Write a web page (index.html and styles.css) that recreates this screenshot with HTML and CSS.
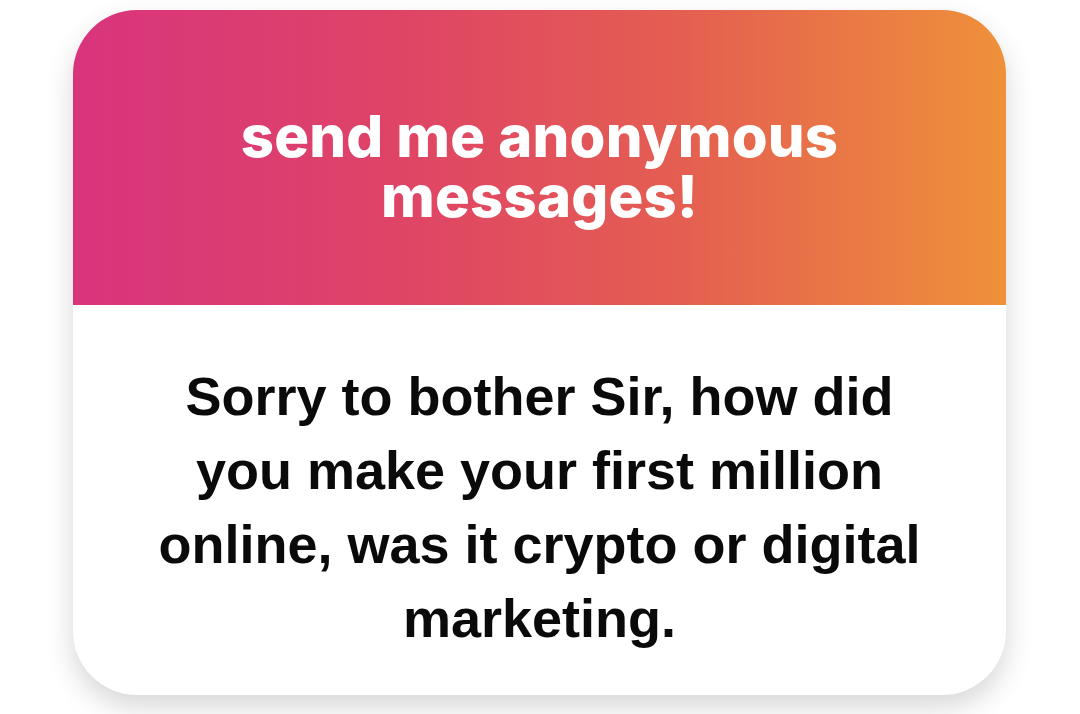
FILE: index.html
```html
<!DOCTYPE html>
<html>
<head>
<meta charset="utf-8">
<link rel="stylesheet" href="styles.css">
</head>
<body>
<div class="card">
  <div class="header">
    <h1 class="title"><span class="title-line">send me anonymous</span><span class="title-line">messages!</span></h1>
  </div>
  <div class="body">
    <p class="message">Sorry to bother Sir, how did<br>you make your first million<br>online, was it crypto or digital<br>marketing.</p>
  </div>
</div>
</body>
</html>
```
FILE: styles.css
```css
html, body {
  margin: 0;
  padding: 0;
  background: #ffffff;
}
body {
  width: 1080px;
  height: 714px;
  overflow: hidden;
  padding-top: 10px;
  box-sizing: border-box;
}
.card {
  width: 933px;
  height: 685px;
  margin-left: 73px;
  border-radius: 64px;
  overflow: hidden;
  background: #ffffff;
  box-shadow: 0 12px 28px rgba(0, 0, 0, 0.16);
  display: flex;
  flex-direction: column;
}
.header {
  height: 295px;
  flex: none;
  box-sizing: border-box;
  padding-top: 96px;
  background: linear-gradient(90deg, #d8347d 0%, #df4466 35%, #e45e51 65%, #ef913a 100%);
  display: flex;
  justify-content: center;
}
.title {
  margin: 0;
  color: #ffffff;
  font-family: "Inter", "Liberation Sans", sans-serif;
  font-weight: 800;
  font-size: 58px;
  text-align: center;
  letter-spacing: 0.2px;
  display: flex;
  flex-direction: column;
  align-items: center;
}
.title-line {
  display: block;
  line-height: 60px;
}
.body {
  flex: 1;
  display: flex;
  justify-content: center;
  padding-top: 54px;
}
.message {
  margin: 0;
  color: #0a0a0a;
  font-family: "Liberation Sans", Arial, sans-serif;
  font-weight: 700;
  font-size: 54px;
  line-height: 74px;
  text-align: center;
}
```
